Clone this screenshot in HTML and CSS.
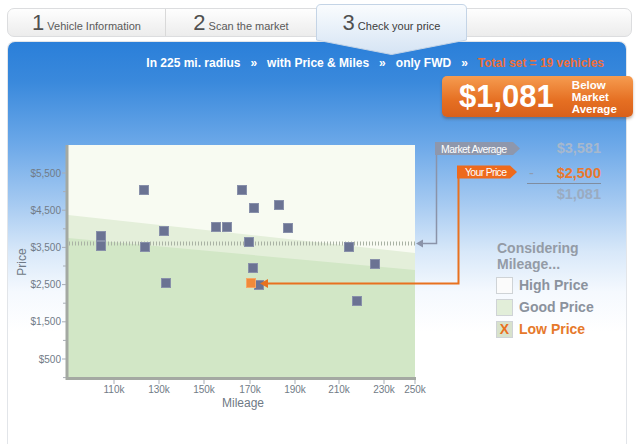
FILE: index.html
```html
<!DOCTYPE html>
<html lang="en">
<head>
  <meta charset="UTF-8" />
  <title>Check your price</title>
  <link rel="stylesheet" href="styles.css">
</head>
<body>
  <div class="steps">
    <div class="step first"><span class="num">1</span><span>Vehicle Information</span></div>
    <div class="step"><span class="num">2</span><span>Scan the market</span></div>
    <div class="step active">
      <svg class="step-shape" width="151" height="51" viewBox="0 0 151 51">
        <defs>
          <linearGradient id="tabGrad" x1="0" y1="0" x2="0" y2="1">
            <stop offset="0" stop-color="#fafcfe"/>
            <stop offset="1" stop-color="#d5e4f4"/>
          </linearGradient>
        </defs>
        <path d="M0.5 36 V5 Q0.5 0.5 5 0.5 H146 Q150.5 0.5 150.5 5 V36 L75.5 50.5 Z" fill="url(#tabGrad)" stroke="#c4d4e6"/>
      </svg>
      <div class="step-label"><span class="num">3</span><span>Check your price</span></div>
    </div>
  </div>

  <div class="panel">
    <div class="filters">
      In 225 mi. radius<span class="sep">&raquo;</span>with Price &amp; Miles<span class="sep">&raquo;</span>only FWD<span class="sep">&raquo;</span><span class="total">Total set = 19 vehicles</span>
    </div>

    <div class="badge-row">
      <div class="badge">
        <span class="badge-amount">$1,081</span>
        <span class="badge-text">Below<br>Market<br>Average</span>
      </div>
    </div>

    <div class="chart-row">
      <svg class="chart" width="482" height="292" viewBox="8 117 482 292">
        <!-- price zones -->
        <rect x="68" y="145" width="347" height="233" fill="#f8fbf2"/>
        <polygon points="68,215 415,253 415,378 68,378" fill="#e4efda"/>
        <polygon points="68,238 415,270 415,378 68,378" fill="#d2e7c6"/>

        <!-- market average line -->
        <line x1="69" y1="243.5" x2="415" y2="243.5" stroke="#a9b2a4" stroke-width="4" stroke-dasharray="1 2"/>

        <!-- axes -->
        <path d="M67 145 V378.5 H416" fill="none" stroke="#a4a9a2" stroke-width="3"/>
        <g stroke="#a8adb4" stroke-width="1">
          <line x1="62" y1="173" x2="66" y2="173"/>
          <line x1="63" y1="191.6" x2="66" y2="191.6"/>
          <line x1="62" y1="210.2" x2="66" y2="210.2"/>
          <line x1="63" y1="228.8" x2="66" y2="228.8"/>
          <line x1="62" y1="247.4" x2="66" y2="247.4"/>
          <line x1="63" y1="266" x2="66" y2="266"/>
          <line x1="62" y1="284.6" x2="66" y2="284.6"/>
          <line x1="63" y1="303.2" x2="66" y2="303.2"/>
          <line x1="62" y1="321.8" x2="66" y2="321.8"/>
          <line x1="63" y1="340.4" x2="66" y2="340.4"/>
          <line x1="62" y1="359" x2="66" y2="359"/>
          <line x1="63" y1="377.6" x2="66" y2="377.6"/>
          <line x1="114" y1="380" x2="114" y2="384"/>
          <line x1="159" y1="380" x2="159" y2="384"/>
          <line x1="204" y1="380" x2="204" y2="384"/>
          <line x1="250" y1="380" x2="250" y2="384"/>
          <line x1="295" y1="380" x2="295" y2="384"/>
          <line x1="339" y1="380" x2="339" y2="384"/>
          <line x1="384" y1="380" x2="384" y2="384"/>
          <line x1="415" y1="380" x2="415" y2="384"/>
        </g>
        <g class="tick-label" text-anchor="end">
          <text x="61" y="176.5">$5,500</text>
          <text x="61" y="213.7">$4,500</text>
          <text x="61" y="250.9">$3,500</text>
          <text x="61" y="288.1">$2,500</text>
          <text x="61" y="325.3">$1,500</text>
          <text x="61" y="362.5">$500</text>
        </g>
        <g class="tick-label" text-anchor="middle">
          <text x="114" y="393">110k</text>
          <text x="159" y="393">130k</text>
          <text x="204" y="393">150k</text>
          <text x="250" y="393">170k</text>
          <text x="295" y="393">190k</text>
          <text x="339" y="393">210k</text>
          <text x="384" y="393">230k</text>
          <text x="415" y="393">250k</text>
        </g>
        <text class="axis-title" x="243" y="407" text-anchor="middle">Mileage</text>
        <text class="axis-title" x="0" y="0" text-anchor="middle" transform="translate(26 262) rotate(-90)">Price</text>

        <!-- listings -->
        <g fill="#6b7393" stroke="#8890aa" stroke-width="1">
          <rect x="139.5" y="185.5" width="9" height="9"/>
          <rect x="237.5" y="185.5" width="9" height="9"/>
          <rect x="249.5" y="203.5" width="9" height="9"/>
          <rect x="274.5" y="200.5" width="9" height="9"/>
          <rect x="211.5" y="222.5" width="9" height="9"/>
          <rect x="222.5" y="222.5" width="9" height="9"/>
          <rect x="159.5" y="226.5" width="9" height="9"/>
          <rect x="283.5" y="223.5" width="9" height="9"/>
          <rect x="96.5" y="231.5" width="9" height="9"/>
          <rect x="96.5" y="241.5" width="9" height="9"/>
          <rect x="140.5" y="242.5" width="9" height="9"/>
          <rect x="244.5" y="237.5" width="9" height="9"/>
          <rect x="344.5" y="242.5" width="9" height="9"/>
          <rect x="370.5" y="259.5" width="9" height="9"/>
          <rect x="248.5" y="263.5" width="9" height="9"/>
          <rect x="161.5" y="278.5" width="9" height="9"/>
          <rect x="254.5" y="280.5" width="9" height="9"/>
          <rect x="352.5" y="296.5" width="9" height="9"/>
        </g>
        <rect x="246.5" y="278.5" width="9" height="9" fill="#f08a3a" stroke="#f5a766"/>

        <!-- connectors -->
        <path d="M436.5 143 V243.5 H421" fill="none" stroke="#8a93a9" stroke-width="1.5"/>
        <polygon points="416,243.5 423,239.5 423,247.5" fill="#8a93a9"/>
        <path d="M458.5 166 V283.5 H266" fill="none" stroke="#e8711f" stroke-width="2"/>
        <polygon points="260,283.5 268,279 268,288" fill="#e8711f"/>

        <!-- tags -->
        <path d="M435 142 H513 L520 148.5 L513 155 H435 Z" fill="#8e97ac"/>
        <text class="tag-text" x="441" y="152.5" textLength="66">Market Average</text>
        <path d="M457 165.5 H510 L517 172 L510 178.5 H457 Z" fill="#ee6a1c"/>
        <text class="tag-text" x="465" y="176" textLength="42">Your Price</text>
      </svg>

      <div class="side">
        <div class="calc">
          <div class="calc-row avg">$3,581</div>
          <div class="calc-row yours"><span class="minus">-</span><span>$2,500</span></div>
          <div class="calc-row diff">$1,081</div>
        </div>

        <div class="legend">
          <div class="legend-title">Considering<br>Mileage...</div>
          <div class="legend-item"><span class="box high"></span>High Price</div>
          <div class="legend-item"><span class="box good"></span>Good Price</div>
          <div class="legend-item low"><span class="box low-box">X</span>Low Price</div>
        </div>
      </div>
    </div>
  </div>
</body>
</html>
```

FILE: styles.css
```css
body {
  margin: 0;
  width: 640px;
  height: 444px;
  overflow: hidden;
  background: #ffffff;
  font-family: "Liberation Sans", Arial, sans-serif;
  color: #555;
}

/* step tabs */
.steps {
  position: relative;
  z-index: 2;
  display: flex;
  box-sizing: border-box;
  width: 625px;
  height: 29px;
  margin: 8px 0 0 7px;
  border: 1px solid #dcdddf;
  border-radius: 7px;
  background: linear-gradient(#fefefe, #ececec);
}

.step {
  display: flex;
  align-items: baseline;
  justify-content: center;
  gap: 3px;
  box-sizing: border-box;
  width: 151px;
  padding-top: 3px;
  font-size: 11px;
  color: #5a5a5a;
  border-left: 1px solid #d9d9d9;
}

.step.first {
  width: 157px;
  border-left: none;
}

.num {
  font-size: 22px;
  line-height: 22px;
  color: #505050;
}

.step.active {
  position: relative;
  align-self: flex-start;
  height: 51px;
  margin-top: -5px;
  padding-top: 0;
  border-left: none;
}

.step-shape {
  position: absolute;
  left: 0;
  top: 0;
}

.step-label {
  position: relative;
  display: flex;
  align-items: baseline;
  justify-content: center;
  gap: 3px;
  width: 100%;
  padding-top: 8px;
  color: #3c3c3c;
}

/* blue panel */
.panel {
  box-sizing: border-box;
  width: 620px;
  min-height: 410px;
  margin: 4px 0 0 7px;
  border: 1px solid #e2e5e9;
  border-bottom: none;
  border-radius: 8px 8px 0 0;
  background: linear-gradient(#2a7fd9 0, #3a89dc 40px, #6aa7e8 100px, #a4c9f1 160px, #d8e8f9 210px, #f5f9fe 250px, #ffffff 290px);
}

.filters {
  padding: 13px 22px 0 0;
  text-align: right;
  font-size: 12px;
  font-weight: bold;
  line-height: 16px;
  color: #ffffff;
  white-space: nowrap;
}

.sep {
  padding: 0 10px;
}

.total {
  color: #ee6f3a;
}

.badge-row {
  display: flex;
  justify-content: flex-end;
  margin: 5px -7px 0 0;
}

.badge {
  display: flex;
  align-items: center;
  gap: 18px;
  box-sizing: border-box;
  width: 191px;
  height: 41px;
  padding-left: 17px;
  border-radius: 5px;
  background: linear-gradient(#f69c50, #e56f22 60%, #d9601a);
  box-shadow: 0 2px 3px rgba(90, 50, 20, 0.35);
  color: #ffffff;
  font-weight: bold;
}

.badge-amount {
  font-size: 31px;
  line-height: 31px;
}

.badge-text {
  font-size: 11.5px;
  line-height: 12px;
}

/* chart + side column */
.chart-row {
  display: flex;
}

.chart {
  display: block;
  flex: none;
  overflow: visible;
}

.tick-label {
  font-size: 10px;
  fill: #717b87;
}

.axis-title {
  font-size: 12px;
  fill: #6f7985;
}

.tag-text {
  font-size: 10.5px;
  fill: #ffffff;
}

.side {
  flex: 1;
}

.calc {
  margin: 21px 25px 0 37px;
  font-size: 14.5px;
  font-weight: bold;
}

.calc-row {
  line-height: 20px;
  text-align: right;
}

.avg {
  color: #a7b8cd;
}

.yours {
  display: flex;
  justify-content: space-between;
  margin-top: 5px;
  border-bottom: 1px solid #7f8da0;
  color: #e8782f;
}

.minus {
  padding-left: 2px;
  font-weight: normal;
  color: #8e9cb0;
}

.diff {
  color: #9aabc1;
}

.legend {
  margin-top: 36px;
  padding-left: 6px;
  font-size: 14px;
  font-weight: bold;
  color: #8b929d;
}

.legend-title {
  padding-left: 1px;
  line-height: 16px;
  color: #949ba6;
}

.legend-item {
  display: flex;
  align-items: center;
  gap: 6px;
  height: 18px;
  margin-top: 4px;
}

.box {
  box-sizing: border-box;
  width: 17px;
  height: 17px;
  border: 1px solid #cfd3d6;
  text-align: center;
  line-height: 15px;
}

.high {
  background: #fbfbfb;
}

.good {
  background: #e2eed9;
}

.low-box {
  background: #d8e2cc;
  color: #ea7020;
  font-size: 14px;
}

.legend-item.low {
  color: #e6792b;
}
```
